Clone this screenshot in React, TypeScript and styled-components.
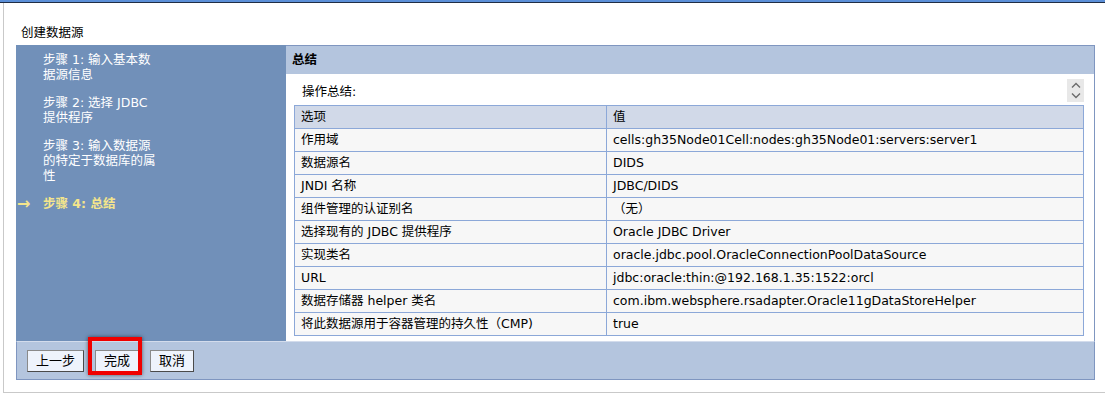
import React from 'react';
import styled, { createGlobalStyle } from 'styled-components';

const GlobalStyle = createGlobalStyle`
  body {
    margin: 0;
    background: #ffffff;
    font-family: 'DejaVu Sans', 'Noto Sans CJK SC', sans-serif;
    font-size: 12.5px;
    color: #000000;
  }
`;

const TopBand = styled.div`
  height: 2px;
  background: #5b8fd8;
  border-bottom: 1px solid #1f2d45;
`;

const Page = styled.div`
  margin-left: 3px;
  border-left: 1px solid #c9c9c9;
  border-bottom: 1px solid #c9c9c9;
  padding: 0 10px 12px 12px;
`;

const Title = styled.div`
  padding: 18px 0 0 5px;
  height: 24px;
  line-height: 24px;
`;

const Wizard = styled.div`
  display: grid;
  grid-template-columns: 270px 1fr;
`;

const StepList = styled.div`
  background: #7190b9;
  padding-top: 7px;
  display: flex;
  flex-direction: column;
  gap: 13px;
`;

const Step = styled.div<{ $current?: boolean }>`
  display: grid;
  grid-template-columns: 27px 117px;
  line-height: 15px;
  color: ${(p) => (p.$current ? '#f4e58c' : '#ffffff')};
  font-weight: ${(p) => (p.$current ? 'bold' : 'normal')};
`;

const Marker = styled.span`
  padding-left: 1px;
  font-size: 16px;
  font-weight: bold;
  line-height: 15px;
`;

const Content = styled.div`
  border-top: 1px solid #7f96c0;
  border-right: 1px solid #7f96c0;
  display: flex;
  flex-direction: column;
`;

const ContentHeader = styled.div`
  background: #b4c5de;
  height: 28px;
  line-height: 28px;
  padding-left: 6px;
  font-weight: bold;
`;

const ContentBody = styled.div`
  background: #ffffff;
  padding: 5px 10px 5px 8px;
`;

const SummaryLine = styled.div`
  display: flex;
  justify-content: space-between;
  align-items: flex-start;
  height: 26px;
`;

const SummaryLabel = styled.span`
  padding: 6px 0 0 8px;
  line-height: 14px;
`;

const ScrollArrows = styled.span`
  width: 17px;
  height: 23px;
  background: #e8e8e8;
  display: flex;
  align-items: center;
  justify-content: center;
`;

const Table = styled.table`
  width: 100%;
  border-collapse: collapse;
  background: #f7f7f7;
`;

const Cell = styled.td<{ $head?: boolean }>`
  border: 1px solid #8ca8d8;
  padding: 3px 6px;
  line-height: 16px;
  background: ${(p) => (p.$head ? '#d1d9e8' : '#f7f7f7')};
  font-weight: normal;
  text-align: left;
  white-space: nowrap;
`;

const NameCell = styled(Cell)`
  width: 299px;
`;

const Footer = styled.div`
  background: #b4c5de;
  border: 1px solid #7f96c0;
  border-top-color: #d3dcec;
  height: 37px;
  display: flex;
  align-items: center;
  gap: 11px;
  padding-left: 10px;
`;

const Button = styled.button`
  font-family: 'DejaVu Sans', 'Noto Sans CJK SC', sans-serif;
  font-size: 13px;
  height: 22px;
  padding: 0 8px;
  background: #eef3fc;
  color: #000000;
  border: 1px solid #8a8a8a;
  border-right-color: #4a4a4a;
  border-bottom-color: #4a4a4a;
  line-height: 18px;
`;

const Highlight = styled.span`
  position: relative;
  display: inline-flex;

  &::after {
    content: '';
    position: absolute;
    left: -7px;
    top: -13px;
    width: 46px;
    height: 30px;
    border: 4px solid #f00000;
    box-shadow: 0 0 4px rgba(0, 0, 0, 0.55);
    pointer-events: none;
  }
`;

const steps = [
  '步骤 1: 输入基本数据源信息',
  '步骤 2: 选择 JDBC 提供程序',
  '步骤 3: 输入数据源的特定于数据库的属性',
  '步骤 4: 总结',
];

const rows: [string, string][] = [
  ['作用域', 'cells:gh35Node01Cell:nodes:gh35Node01:servers:server1'],
  ['数据源名', 'DIDS'],
  ['JNDI 名称', 'JDBC/DIDS'],
  ['组件管理的认证别名', '（无）'],
  ['选择现有的 JDBC 提供程序', 'Oracle JDBC Driver'],
  ['实现类名', 'oracle.jdbc.pool.OracleConnectionPoolDataSource'],
  ['URL', 'jdbc:oracle:thin:@192.168.1.35:1522:orcl'],
  ['数据存储器 helper 类名', 'com.ibm.websphere.rsadapter.Oracle11gDataStoreHelper'],
  ['将此数据源用于容器管理的持久性（CMP)', 'true'],
];

const App: React.FC = () => {
  const current = 3;

  return (
    <>
      <GlobalStyle />
      <TopBand />
      <Page>
        <Title>创建数据源</Title>
        <Wizard>
          <StepList>
            {steps.map((s, i) => (
              <Step key={s} $current={i === current}>
                <Marker>{i === current ? '→' : ''}</Marker>
                <span>{s}</span>
              </Step>
            ))}
          </StepList>
          <Content>
            <ContentHeader>总结</ContentHeader>
            <ContentBody>
              <SummaryLine>
                <SummaryLabel>操作总结:</SummaryLabel>
                <ScrollArrows>
                  <svg width="12" height="19" viewBox="0 0 12 19">
                    <path d="M2 6.5 L6 2.5 L10 6.5" fill="none" stroke="#6b6b6b" strokeWidth="1.4" />
                    <path d="M2 12.5 L6 16.5 L10 12.5" fill="none" stroke="#6b6b6b" strokeWidth="1.4" />
                  </svg>
                </ScrollArrows>
              </SummaryLine>
              <Table>
                <thead>
                  <tr>
                    <NameCell as="th" $head>选项</NameCell>
                    <Cell as="th" $head>值</Cell>
                  </tr>
                </thead>
                <tbody>
                  {rows.map(([k, v]) => (
                    <tr key={k}>
                      <NameCell>{k}</NameCell>
                      <Cell>{v}</Cell>
                    </tr>
                  ))}
                </tbody>
              </Table>
            </ContentBody>
          </Content>
        </Wizard>
        <Footer>
          <Button>上一步</Button>
          <Highlight>
            <Button>完成</Button>
          </Highlight>
          <Button>取消</Button>
        </Footer>
      </Page>
    </>
  );
};

export default App;
